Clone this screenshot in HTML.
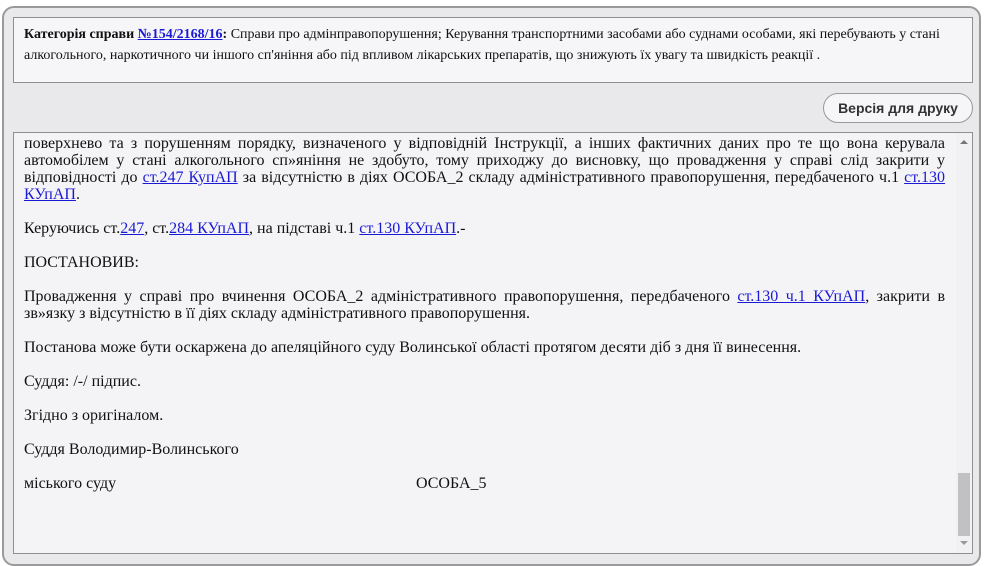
<!DOCTYPE html>
<html><head><meta charset="utf-8"><style>
html,body{margin:0;padding:0;width:990px;height:562px;background:#fff;overflow:hidden}
.outer{position:absolute;left:2px;top:6px;width:979px;height:560px;border:2px solid #9a9a9a;border-radius:12px;background:#e9e8ea;box-sizing:border-box}
.hdr{position:absolute;left:13px;top:17px;width:960px;height:66px;box-sizing:border-box;border:1px solid #8f8f8f;background:#f6f6f8;padding:6px 10px 5px;font:14px/21px "Liberation Serif",serif;color:#111}
a{color:#1a1ad6;text-decoration:underline}
.btn{position:absolute;left:823px;top:93px;width:150px;height:30px;box-sizing:border-box;border:1px solid #999;border-radius:15px;background:#f6f6f8;font:bold 14px/28px "Liberation Sans",sans-serif;text-align:center;color:#333}
.box{position:absolute;left:13px;top:132px;width:960px;height:422px;box-sizing:border-box;border:1px solid #8f8f8f;background:#f4f3f6;overflow:hidden}
.txt{position:absolute;left:10px;top:2px;width:921px;font:16px/17px "Liberation Serif",serif;color:#111;text-align:justify}
.txt p{margin:0 0 17px}
.sb{position:absolute;right:1px;top:0;width:15px;height:420px;background:#f1f0f3}
.thumb{position:absolute;left:2px;top:340px;width:12px;height:63px;background:#c1c1c3}
.up,.dn{position:absolute;left:4px;width:0;height:0;border-left:4px solid transparent;border-right:4px solid transparent}
.up{top:7px;border-bottom:4px solid #777}
.dn{top:408px;border-top:4px solid #999}
</style></head><body>
<div class="outer"></div>
<div class="hdr"><b>Категорія справи <a href="#">№154/2168/16</a>:</b> Справи про адмінправопорушення; Керування транспортними засобами або суднами особами, які перебувають у стані алкогольного, наркотичного чи іншого сп'яніння або під впливом лікарських препаратів, що знижують їх увагу та швидкість реакції .</div>
<div class="btn">Версія для друку</div>
<div class="box">
<div class="txt">
<p>поверхнево та з порушенням порядку, визначеного у відповідній Інструкції, а інших фактичних даних про те що вона керувала автомобілем у стані алкогольного сп»яніння не здобуто, тому приходжу до висновку, що провадження у справі слід закрити у відповідності до <a href="#">ст.247 КупАП</a> за відсутністю в діях ОСОБА_2 складу адміністративного правопорушення, передбаченого ч.1 <a href="#">ст.130 КУпАП</a>.</p>
<p>Керуючись ст.<a href="#">247</a>, ст.<a href="#">284 КУпАП</a>, на підставі ч.1 <a href="#">ст.130 КУпАП</a>.-</p>
<p>ПОСТАНОВИВ:</p>
<p>Провадження у справі про вчинення ОСОБА_2 адміністративного правопорушення, передбаченого <a href="#">ст.130 ч.1 КУпАП</a>, закрити в зв»язку з відсутністю в її діях складу адміністративного правопорушення.</p>
<p>Постанова може бути оскаржена до апеляційного суду Волинської області протягом десяти діб з дня її винесення.</p>
<p>Суддя: /-/ підпис.</p>
<p>Згідно з оригіналом.</p>
<p>Суддя Володимир-Волинського</p>
<p><span style="display:inline-block;width:392px">міського суду</span>ОСОБА_5</p>
</div>
<div class="sb"><div class="up"></div><div class="thumb"></div><div class="dn"></div></div>
</div>
</body></html>
